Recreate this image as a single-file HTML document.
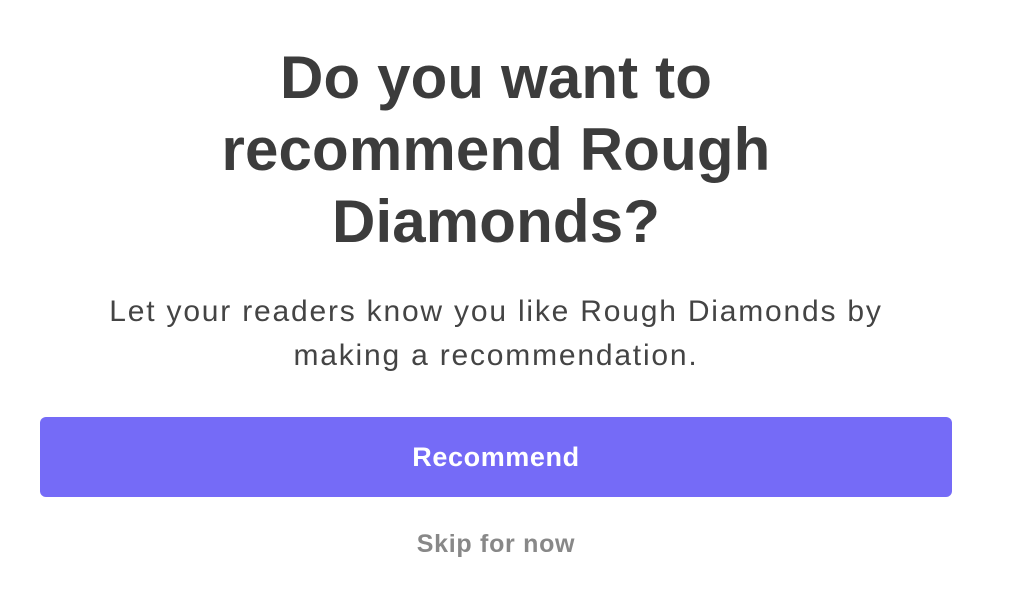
<!DOCTYPE html>
<html><head><meta charset="utf-8"><style>
html,body{margin:0;padding:0;background:#fff;width:1020px;height:600px;overflow:hidden;font-family:"Liberation Sans",Arial,sans-serif}
.wrap{position:absolute;left:40px;width:912px;top:0;text-align:center}
h1{margin:0;position:absolute;top:42px;left:0;width:912px;font-size:60px;line-height:72px;font-weight:bold;color:#3c3c3c;white-space:nowrap;letter-spacing:0.15px}
p{margin:0;position:absolute;top:290px;left:0;width:912px;font-size:30px;line-height:44px;color:#444;white-space:nowrap;letter-spacing:1.8px}
.btn{position:absolute;top:417px;left:0;width:912px;height:80px;background:#756bf7;border-radius:6px;color:#fff;font-weight:bold;font-size:27px;line-height:80px;letter-spacing:0.6px}
.skip{position:absolute;top:528px;left:0;width:912px;font-size:25px;line-height:32px;font-weight:bold;color:#888;letter-spacing:0.7px}
</style></head><body>
<div class="wrap">
<h1>Do you want to<br>recommend Rough<br>Diamonds?</h1>
<p>Let your readers know you like Rough Diamonds by<br>making a recommendation.</p>
<div class="btn">Recommend</div>
<div class="skip">Skip for now</div>
</div>
</body></html>
